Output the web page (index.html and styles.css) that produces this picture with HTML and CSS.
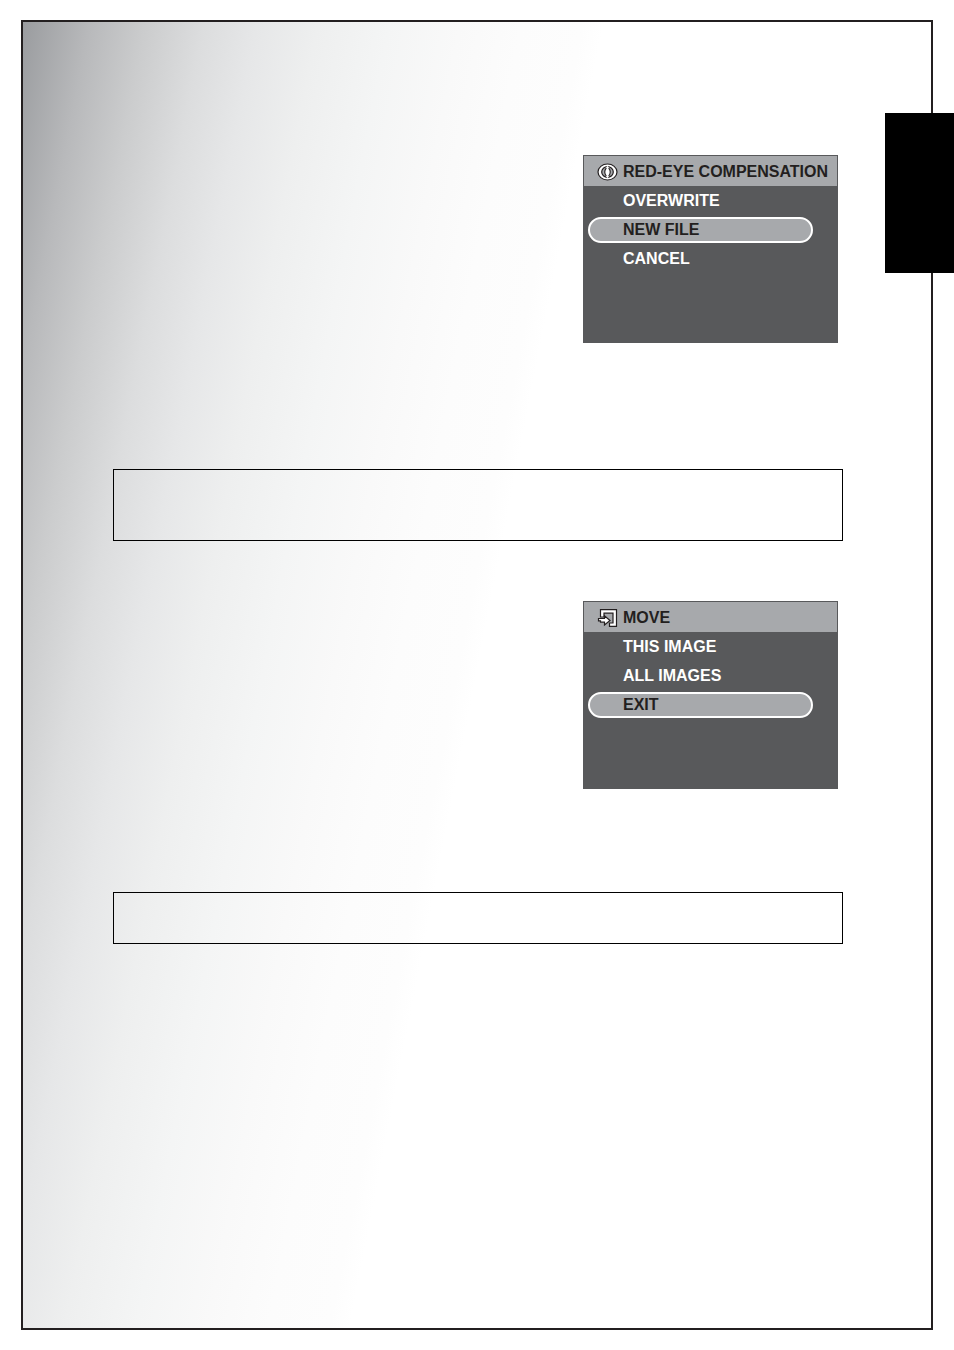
FILE: index.html
```html
<!DOCTYPE html>
<html lang="en">
<head>
  <meta charset="UTF-8" />
  <meta name="viewport" content="width=device-width, initial-scale=1" />
  <title>Red-eye compensation and Move</title>
  <link rel="stylesheet" href="styles.css">
</head>
<body>

<div class="page-tab"></div>

<main class="sheet">
  <section class="panel">
    <h2 class="panel-title">
      <svg class="icon" viewBox="0 0 21 18" aria-hidden="true">
        <ellipse cx="10.5" cy="9" rx="9.5" ry="8" fill="#fff" stroke="#231f20" stroke-width="1.2"/>
        <ellipse cx="10.5" cy="9" rx="5.8" ry="5.3" fill="#a7a9ac" stroke="#231f20" stroke-width="1.2"/>
        <path d="M10.5 2.8C6.8 6.5 6.8 11.5 10.5 15.2C14.2 11.5 14.2 6.5 10.5 2.8Z" fill="#fff"/>
        <path d="M9.3 4.8C7.3 7.5 7.3 10.5 9.3 13.2M11.7 4.8C13.7 7.5 13.7 10.5 11.7 13.2" fill="none" stroke="#231f20" stroke-width="1.1"/>
      </svg>
      RED-EYE COMPENSATION
    </h2>
    <ul class="menu">
      <li><button type="button">OVERWRITE</button></li>
      <li><button type="button" class="selected">NEW FILE</button></li>
      <li><button type="button">CANCEL</button></li>
    </ul>
  </section>

  <div class="note note-large"></div>

  <section class="panel">
    <h2 class="panel-title">
      <svg class="icon" viewBox="0 0 21 18" aria-hidden="true">
        <path d="M3.5 .7H19.5V17.3H12.5V14H16V4.2H7V8H3.5Z" fill="#fff" stroke="#231f20" stroke-width="1.2"/>
        <path d="M1.5 9.5H7.5V6.8L13 11.5L7.5 16V13.2H3.5V11.8H1.5Z" fill="#fff" stroke="#231f20" stroke-width="1.2"/>
      </svg>
      MOVE
    </h2>
    <ul class="menu">
      <li><button type="button">THIS IMAGE</button></li>
      <li><button type="button">ALL IMAGES</button></li>
      <li><button type="button" class="selected">EXIT</button></li>
    </ul>
  </section>

  <div class="note"></div>
</main>

</body>
</html>
```
FILE: styles.css
```css
* {
  box-sizing: border-box;
}

body {
  position: relative;
  margin: 0;
  padding: 20px 21px;
  min-height: 100vh;
  display: flex;
  flex-direction: column;
  background: #fff;
  font-family: "Liberation Sans", Arial, sans-serif;
}

/* Page frame */
.sheet {
  flex-grow: 1;
  display: flex;
  flex-direction: column;
  padding: 133px 88px 60px 90px;
  border: 2px solid #231f20;
  background: linear-gradient(101deg, #9a9c9f 0, #b8b9bb 66px, #cbcccd 120px, #dcddde 178px, #e6e7e8 230px, #eeefef 290px, #f4f5f5 360px, #f9f9f9 430px, #fcfcfc 490px, #fdfdfd 550px, #fff 570px);
}

/* Black chapter tab on the page edge */
.page-tab {
  position: absolute;
  top: 113px;
  right: 0;
  width: 69px;
  height: 160px;
  background: #000;
}

/* Camera screens */
.panel {
  align-self: flex-end;
  width: 255px;
  max-width: 100%;
  min-height: 188px;
  margin-right: 5px;
  border: 1px solid #58595b;
  background: #58595b;
}

.panel-title {
  display: flex;
  align-items: center;
  gap: 5px;
  height: 30px;
  margin: 0;
  padding: 2px 0 0 13px;
  background: #a7a9ac;
  color: #231f20;
  font-size: 16px;
  white-space: nowrap;
}

.icon {
  flex: none;
  width: 21px;
  height: 18px;
}

.menu {
  display: flex;
  flex-direction: column;
  gap: 3px;
  margin: 0;
  padding: 2px 24px 0 4px;
  list-style: none;
}

.menu button {
  display: block;
  width: 100%;
  height: 26px;
  padding: 0 0 0 33px;
  border: 2px solid transparent;
  border-radius: 13px;
  background: none;
  color: #fff;
  font: bold 16px "Liberation Sans", Arial, sans-serif;
  text-align: left;
  cursor: pointer;
}

.menu .selected {
  border-color: #fff;
  background: #a7a9ac;
  color: #231f20;
}

/* Note boxes */
.note {
  min-height: 52px;
  margin-top: 103px;
  border: 1px solid #000;
}

.note-large {
  min-height: 72px;
  margin: 126px 0 60px;
}
```
